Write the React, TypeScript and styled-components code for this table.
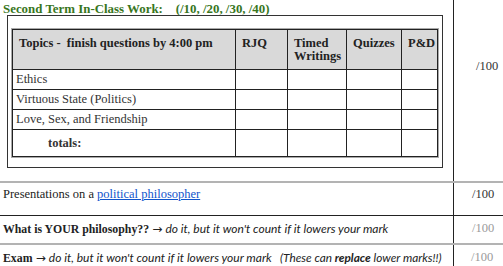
import styled, { createGlobalStyle } from 'styled-components';

const Global = createGlobalStyle`
  body {
    margin: 0;
    background: #fff;
    font-family: 'Liberation Serif', serif;
    color: #222;
  }
`;

const Sheet = styled.div`
  width: 503px;
  height: 266px;
  overflow: hidden;
  display: flex;
  flex-direction: column;
`;

const Row = styled.div<{ $h: number; $line: string; $lw?: number }>`
  display: grid;
  grid-template-columns: 454px 1fr;
  box-sizing: border-box;
  height: ${(p) => p.$h}px;
  border-bottom: ${(p) => p.$lw ?? 1}px solid ${(p) => p.$line};
  flex-shrink: 0;
`;

const Cell = styled.div<{ $pt: number }>`
  border-right: 1px solid #222;
  padding: ${(p) => p.$pt}px 0 0 3px;
  font-size: 12.5px;
  white-space: pre;
`;

const Label = styled.b`
  font-size: 11.8px;
`;

const Score = styled.div<{ $pt: number; $muted?: boolean; $pl?: number }>`
  padding: ${(p) => p.$pt}px 0 0 ${(p) => p.$pl ?? 18}px;
  font-size: 12.5px;
  color: ${(p) => (p.$muted ? '#9a9a9a' : '#333')};
`;

const Title = styled.div`
  color: #38761d;
  font-weight: bold;
  font-size: 12.9px;
  line-height: 12px;
  white-space: pre;
`;

const Box = styled.div`
  margin: 0 0 0 4px;
  width: 436px;
  height: 153px;
  box-sizing: border-box;
  border: 1px solid #333;
  padding: 13px 0 0 4px;
`;

const Table = styled.table`
  border-collapse: collapse;
  width: 425px;
  table-layout: fixed;
  outline: 1px solid #aaa;
  font-size: 12.5px;
`;

const Col = styled.col<{ $w: number }>`
  width: ${(p) => p.$w}px;
`;

const Th = styled.th`
  background: #d9d9d9;
  border: 1px solid #222;
  height: 40px;
  box-sizing: border-box;
  padding: 7px 0 0 6px;
  text-align: left;
  vertical-align: top;
  line-height: 13px;
  color: #222;
  white-space: nowrap;
  overflow: hidden;
`;

const Td = styled.td<{ $bold?: boolean; $indent?: number }>`
  border: 1px solid #222;
  height: 19px;
  padding: 0 0 0 ${(p) => p.$indent ?? 3}px;
  font-weight: ${(p) => (p.$bold ? 'bold' : 'normal')};
  color: #333;
  line-height: 19px;
`;

const TotalsTd = styled(Td)`
  height: 26px;
`;

const Link = styled.a`
  color: #1155cc;
  text-decoration: underline;
`;

const Arrow = styled.span`
  font-family: 'DejaVu Sans', sans-serif;
  font-size: 12px;
`;

const Note = styled.span<{ $size?: number }>`
  font-family: Lato, 'Liberation Sans', sans-serif;
  font-style: italic;
  font-size: ${(p) => p.$size ?? 12}px;
  color: #222;
`;

const topics = ['Ethics', 'Virtuous State (Politics)', 'Love, Sex, and Friendship'];
const cols = [223, 52, 59, 55, 36];

export default function App() {
  return (
    <Sheet>
      <Global />
      <Row $h={183} $line="#b3b3b3" $lw={2}>
        <Cell $pt={3}>
          <Title>{'Second Term In-Class Work:    (/10, /20, /30, /40)'}</Title>
          <Box>
            <Table>
              <colgroup>
                {cols.map((w, i) => (
                  <Col key={i} $w={w} />
                ))}
              </colgroup>
              <thead>
                <tr>
                  <Th>Topics -&nbsp; finish questions by 4:00 pm</Th>
                  <Th>RJQ</Th>
                  <Th>
                    Timed
                    <br />
                    Writings
                  </Th>
                  <Th>Quizzes</Th>
                  <Th>P&amp;D</Th>
                </tr>
              </thead>
              <tbody>
                {topics.map((t) => (
                  <tr key={t}>
                    <Td>{t}</Td>
                    <Td />
                    <Td />
                    <Td />
                    <Td />
                  </tr>
                ))}
                <tr>
                  <TotalsTd $bold $indent={35}>
                    totals:
                  </TotalsTd>
                  <TotalsTd />
                  <TotalsTd />
                  <TotalsTd />
                  <TotalsTd />
                </tr>
              </tbody>
            </Table>
          </Box>
        </Cell>
        <Score $pt={59} $pl={22}>
          /100
        </Score>
      </Row>
      <Row $h={33} $line="#222">
        <Cell $pt={4}>
          Presentations on a <Link href="#">political philosopher</Link>
        </Cell>
        <Score $pt={4}>/100</Score>
      </Row>
      <Row $h={29} $line="#b3b3b3" $lw={2}>
        <Cell $pt={5}>
          <Label>What is YOUR philosophy??</Label> <Arrow>→</Arrow>{' '}
          <Note>do it, but it won't count if it lowers your mark</Note>
        </Cell>
        <Score $pt={5} $muted>
          /100
        </Score>
      </Row>
      <Row $h={30} $line="transparent">
        <Cell $pt={5}>
          <Label>Exam</Label> <Arrow>→</Arrow> <Note>do it, but it won't count if it lowers your mark</Note>
          <Note $size={11.8}>
            {'   (These can '}
            <b>replace</b>
            {' lower marks!!)'}
          </Note>
        </Cell>
        <Score $pt={5} $muted $pl={17}>
          /100
        </Score>
      </Row>
    </Sheet>
  );
}
